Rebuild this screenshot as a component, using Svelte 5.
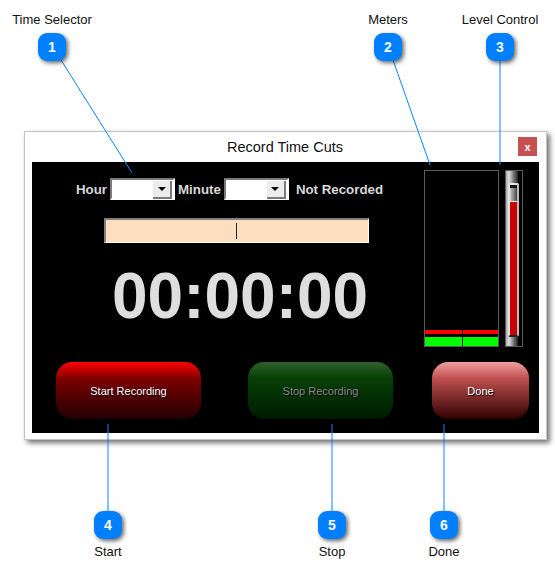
<script>
	const topCallouts = [
		{ n: 1, label: 'Time Selector', x: 38, labelX: 52 },
		{ n: 2, label: 'Meters', x: 374, labelX: 388 },
		{ n: 3, label: 'Level Control', x: 486, labelX: 500 }
	];
	const bottomCallouts = [
		{ n: 4, label: 'Start', x: 94 },
		{ n: 5, label: 'Stop', x: 318 },
		{ n: 6, label: 'Done', x: 430 }
	];
	const lines = [
		[61, 60, 132, 173],
		[393, 60, 430, 165],
		[500, 60, 500, 165],
		[108, 424, 108, 512],
		[332, 424, 332, 512],
		[444, 424, 444, 512]
	];
</script>

<div class="page">
	<div class="window">
		<div class="titlebar">
			<span class="title">Record Time Cuts</span>
			<span class="close">x</span>
		</div>
		<div class="panel">
			<div class="upper">
				<div class="controls">
					<div class="time-row">
						<span class="field-label">Hour</span>
						<span class="combo"><span class="combo-btn"><i></i></span></span>
						<span class="field-label">Minute</span>
						<span class="combo"><span class="combo-btn"><i></i></span></span>
						<span class="field-label status">Not Recorded</span>
					</div>
					<div class="progress"><span class="tick"></span></div>
					<div class="clock">00:00:00</div>
				</div>
				<div class="meters">
					<div class="channel"><span class="peak"></span><span class="level"></span></div>
					<div class="channel"><span class="peak"></span><span class="level"></span></div>
				</div>
				<div class="slider">
					<div class="track"><div class="fill"></div></div>
				</div>
			</div>
			<div class="buttons">
				<div class="btn start">Start Recording</div>
				<div class="btn stop">Stop Recording</div>
				<div class="btn done">Done</div>
			</div>
		</div>
	</div>

	<svg class="leaders" width="555" height="576">
		{#each lines as [x1, y1, x2, y2]}
			<line {x1} {y1} {x2} {y2} />
		{/each}
	</svg>

	{#each topCallouts as c}
		<span class="callout-label top" style="left: {c.labelX}px">{c.label}</span>
		<span class="badge" style="left: {c.x}px; top: 33px">{c.n}</span>
	{/each}
	{#each bottomCallouts as c}
		<span class="badge" style="left: {c.x}px; top: 511px">{c.n}</span>
		<span class="callout-label bottom" style="left: {c.x + 14}px">{c.label}</span>
	{/each}
</div>

<style>
	:global(body) {
		margin: 0;
		background: #fff;
		font-family: 'Liberation Sans', Arial, sans-serif;
	}

	.page {
		position: relative;
		width: 555px;
		height: 576px;
		padding: 131px 0 0 24px;
		box-sizing: border-box;
		overflow: hidden;
	}

	.window {
		width: 523px;
		height: 309px;
		box-sizing: border-box;
		background: #fff;
		border: 1px solid #c4c4c4;
		padding: 0 7px 6px;
		box-shadow: 3px 3px 5px rgba(0, 0, 0, 0.55);
	}

	.titlebar {
		position: relative;
		height: 30px;
		display: flex;
		align-items: center;
		justify-content: center;
	}

	.title {
		font-size: 14.5px;
		color: #111;
		margin-left: -1px;
	}

	.close {
		position: absolute;
		right: 2px;
		top: 5px;
		width: 19px;
		height: 19px;
		background: #c75050;
		color: #fff;
		font-size: 11px;
		font-weight: bold;
		display: flex;
		align-items: center;
		justify-content: center;
	}

	.panel {
		width: 507px;
		height: 271px;
		box-sizing: border-box;
		background: #000;
		padding: 8px 10px 0 24px;
	}

	.upper {
		display: flex;
		height: 177px;
	}

	.controls {
		width: 368px;
		flex: none;
		padding-top: 8px;
		box-sizing: border-box;
	}

	.time-row {
		display: flex;
		align-items: center;
		height: 22px;
		margin-left: 20px;
	}

	.field-label {
		color: #d8d8d8;
		font-size: 13.3px;
		font-weight: bold;
		margin-right: 3px;
		white-space: nowrap;
	}

	.status {
		margin-left: 4px;
		margin-right: 0;
	}

	.combo {
		width: 65px;
		height: 22px;
		flex: none;
		box-sizing: border-box;
		background: #fff;
		border: 2px solid;
		border-color: #7a7a7a #fff #fff #7a7a7a;
		margin-right: 3px;
		display: flex;
		justify-content: flex-end;
		padding: 1px;
	}

	.combo-btn {
		width: 17px;
		height: 16px;
		background: #ececec;
		border-right: 2px solid #7a7a7a;
		border-bottom: 2px solid #7a7a7a;
		display: flex;
		align-items: center;
		justify-content: center;
	}

	.combo-btn i {
		width: 0;
		height: 0;
		border: 4px solid transparent;
		border-top: 4px solid #000;
		border-bottom: 0;
	}

	.progress {
		width: 265px;
		height: 25px;
		box-sizing: border-box;
		margin: 18px 0 0 48px;
		background: #fddfc0;
		border: 1px solid #fff;
		border-top: 2px solid #808080;
		border-left: 2px solid #808080;
		display: flex;
		justify-content: center;
		align-items: center;
	}

	.tick {
		width: 1px;
		height: 16px;
		background: #0a2a50;
		margin-left: -1px;
	}

	.clock {
		margin: 16px 0 0 56px;
		color: #dedede;
		font-size: 64px;
		font-weight: bold;
		line-height: 74px;
		white-space: nowrap;
	}

	.meters {
		width: 75px;
		height: 177px;
		flex: none;
		box-sizing: border-box;
		border: 1px solid #5a5a5a;
		display: grid;
		grid-template-columns: 37px 1fr;
		gap: 1px;
	}

	.channel {
		display: flex;
		flex-direction: column;
		justify-content: flex-end;
	}

	.peak {
		height: 4px;
		background: #f00;
		margin-bottom: 3px;
	}

	.level {
		height: 9px;
		background: #0f0;
	}

	.slider {
		width: 18px;
		height: 177px;
		flex: none;
		margin-left: 6px;
		box-sizing: border-box;
		border: 1px solid #5a5a5a;
		background: linear-gradient(90deg, #aaa, #ddd 25%, #666 70%, #222) no-repeat;
		background-size: 12px 100%;
		padding: 12px 3px 9px 2px;
	}

	.track {
		height: 100%;
		box-sizing: border-box;
		border: 2px solid #e4e4e4;
		border-right-color: #bbb;
		border-bottom-color: #222;
		border-radius: 2px;
		background:
			linear-gradient(#111 3px, transparent 3px),
			linear-gradient(90deg, #ccc, #444);
		padding-top: 16px;
	}

	.fill {
		height: 100%;
		background: #c80000;
		border-top: 1px solid #fff;
		box-sizing: border-box;
	}

	.buttons {
		display: flex;
		margin-top: 15px;
	}

	.btn {
		width: 145px;
		height: 57px;
		flex: none;
		border-radius: 16px;
		display: flex;
		align-items: center;
		justify-content: center;
		font-size: 11px;
		color: #fff;
		text-shadow: 1px 1px 1px #000;
		box-sizing: border-box;
	}

	.start {
		background: linear-gradient(#f00, #7c0000 30%, #200000);
	}

	.stop {
		margin-left: 47px;
		color: #8a8a8a;
		background: linear-gradient(#2e622e, #064006 28%, #001a00);
	}

	.done {
		width: 97px;
		margin-left: 39px;
		background: linear-gradient(#f0a0a0, #c05050 28%, #300000);
	}

	.leaders {
		position: absolute;
		left: 0;
		top: 0;
		pointer-events: none;
	}

	.leaders line {
		stroke: #0a84ff;
		stroke-width: 1;
	}

	.badge {
		position: absolute;
		width: 28px;
		height: 28px;
		border-radius: 9px;
		background: #007fff;
		color: #fff;
		font-size: 14px;
		font-weight: bold;
		display: flex;
		align-items: center;
		justify-content: center;
		box-shadow: 2px 2px 4px rgba(0, 0, 0, 0.6);
	}

	.callout-label {
		position: absolute;
		transform: translateX(-50%);
		font-size: 13px;
		color: #111;
		white-space: nowrap;
		line-height: 16px;
	}

	.top {
		top: 12px;
	}

	.bottom {
		top: 544px;
	}
</style>
